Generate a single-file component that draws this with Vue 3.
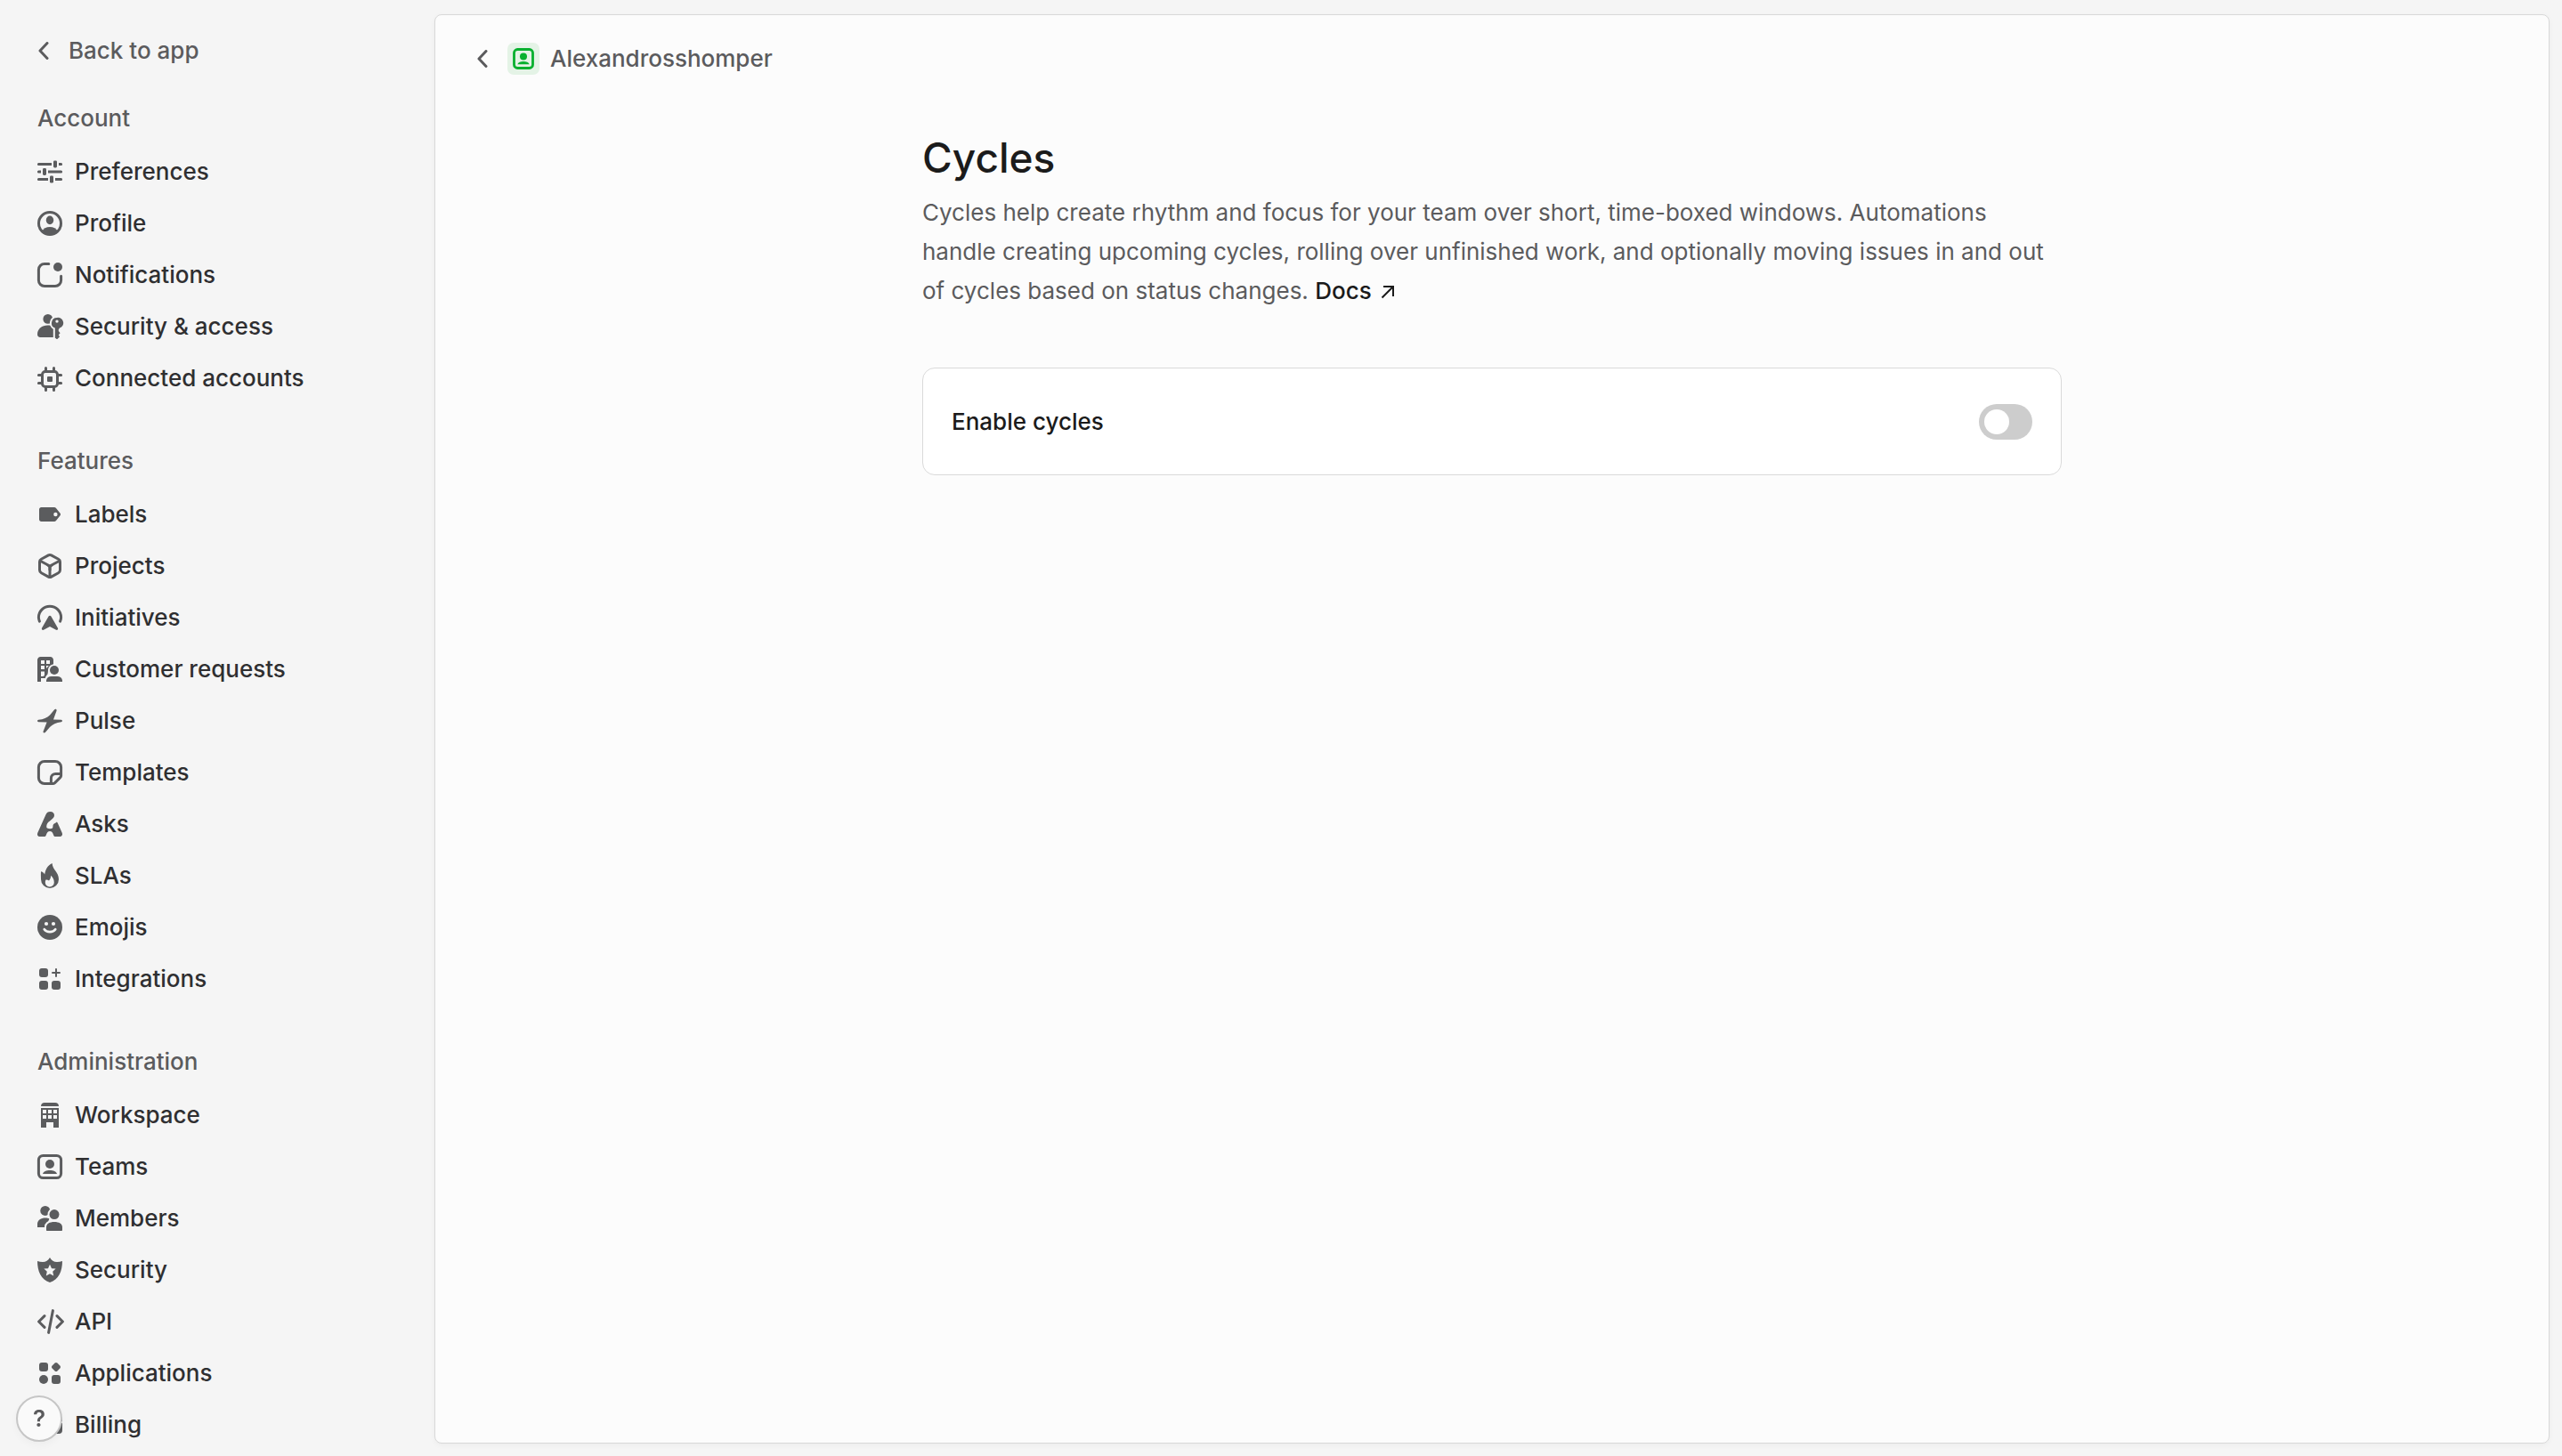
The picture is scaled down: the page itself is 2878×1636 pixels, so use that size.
<script setup>
import { ref } from 'vue'

const cyclesEnabled = ref(false)

const sections = [
  {
    title: 'Account',
    items: [
      {
        label: 'Preferences',
        icon: '<path class="line" d="M1.7 3.7H9M13 3.7h1.3M1.7 8H3M7 8h7.3M1.7 12.3H7M11 12.3h3.3"/><rect class="gap" x="10" y="1.7" width="2" height="4" rx=".7"/><rect class="gap" x="4" y="6" width="2" height="4" rx=".7"/><rect class="gap" x="8" y="10.3" width="2" height="4" rx=".7"/><rect x="10" y="1.7" width="2" height="4" rx=".7"/><rect x="4" y="6" width="2" height="4" rx=".7"/><rect x="8" y="10.3" width="2" height="4" rx=".7"/>'
      },
      {
        label: 'Profile',
        icon: '<circle class="line" cx="8" cy="8" r="6.25"/><ellipse cx="8" cy="6.2" rx="2.1" ry="2.4"/><path d="M3.5 12.6C4.3 10.9 6 10 8 10s3.7.9 4.5 2.6C11.400 13.900 9.800 14.600 8 14.600s-3.400-.700-4.500-2z"/>'
      },
      {
        label: 'Notifications',
        icon: '<path class="line" d="M7.400 1.700H5A3.300 3.300 0 0 0 1.700 5v6A3.300 3.300 0 0 0 5 14.300h6a3.300 3.300 0 0 0 3.300-3.300V8.600"/><circle cx="12.500" cy="3.500" r="2.500"/>'
      },
      {
        label: 'Security & access',
        icon: '<circle cx="6.900" cy="3.700" r="2.700"/><path d="M1 12.300c0-3 2.600-5 5.800-5 1.300 0 2.400.3 3.200 1V14H2.600C1.600 14 1 13.300 1 12.300z"/><path class="gap" d="M12 3a3 3 0 0 0-1.100 5.800v5.400l1 .8h.3l1.300-1.300-.7-1.100.9-1-.9-1.100.700-1.800A3 3 0 0 0 12 3z"/><path fill-rule="evenodd" d="M12 3a3 3 0 0 0-1.100 5.800v5.400l.9.800h.4l1.300-1.300-.6-1.100.9-1-.9-1.100v-.9l.6-.8A3 3 0 0 0 12 3zm0 1.200a.85.85 0 1 1 0 1.700.85.85 0 0 1 0-1.700z"/>'
      },
      {
        label: 'Connected accounts',
        icon: '<rect class="line" x="3.750" y="4.250" width="8.500" height="8.500" rx="1.600"/><rect x="6.500" y="7" width="3" height="3" rx=".5"/><path class="line" d="M5.750 4V2.200M10.250 4V2.200M5.750 13v1.800M10.250 13v1.800M3.500 6.250H1.700M3.500 10.750H1.700M12.500 6.250h1.800M12.500 10.750h1.800"/>'
      }
    ]
  },
  {
    title: 'Features',
    items: [
      {
        label: 'Labels',
        icon: '<path fill-rule="evenodd" d="M3.200 4h7.300c.4 0 .7.2 1 .5l2.300 2.900c.3.400.3.800 0 1.200l-2.300 2.900c-.3.300-.6.500-1 .500H3.200C2.500 12 2 11.500 2 10.800V5.200C2 4.500 2.500 4 3.200 4zm8 2.900a1.100 1.100 0 1 0 0 2.200 1.100 1.100 0 0 0 0-2.200z"/>'
      },
      {
        label: 'Projects',
        icon: '<path class="line" d="M7.200 1.950a1.700 1.700 0 0 1 1.600 0l4 2.200a1.800 1.800 0 0 1 .950 1.600v4.500a1.800 1.800 0 0 1-.950 1.600l-4 2.200a1.700 1.700 0 0 1-1.600 0l-4-2.200a1.800 1.800 0 0 1-.950-1.600v-4.500a1.800 1.800 0 0 1 .950-1.600z"/><path class="line" d="M2.600 5.100 8 8l5.400-2.900M8 8v6"/><path d="M6 7 8 8l2-1v.6L8.750 8.700v1.800h-1.500V8.700L6 7.600z"/>'
      },
      {
        label: 'Initiatives',
        icon: '<path class="line" d="M2.200 10.100A6.300 6.300 0 0 1 1.700 7.900 6.300 6.300 0 0 1 14.300 7.900c0 .8-.2 1.500-.5 2.200"/><path d="M7.300 7.200c.3-.5 1.100-.5 1.400 0l3.800 6.700c.3.700-.3 1.300-1 1L8 13l-3.500 1.900c-.7.300-1.300-.3-1-1z"/>'
      },
      {
        label: 'Customer requests',
        icon: '<path fill-rule="evenodd" d="M2.800 1h5.400C9.200 1 10 1.800 10 2.800v2.300C8.300 5.500 7 6.800 7 8.500c0 .9-.1 1.700-.3 2.400C6 11.500 5.600 12.300 5.400 13H3v2H1V2.800C1 1.800 1.800 1 2.800 1zM3 3v2h2V3zm3 0v2h2V3zM3 6v2h2V6zm3 0v1.500L7.400 6zM3 9.300V12h1c.7 0 1-.5 1-1V9.300z"/><circle cx="10.500" cy="8.500" r="2.500"/><path d="M6 14.300C6.200 12.800 7.300 12 8.800 12h3.400c1.500 0 2.600.8 2.800 2.300V15H6z"/>'
      },
      {
        label: 'Pulse',
        icon: '<path d="M10.500 1.700c.5-.7 1.500-.3 1.300.5L10 7.200l4.400.2c.8.100.8 1.100 0 1.200C11.500 8.900 9.500 10 8 11.500l-2.600 3c-.5.500-1.400.1-1.100-.6L6.300 8.800 1.600 8.600C.8 8.500.8 7.500 1.600 7.400 4.500 7.100 6.500 6.200 8 4.700z"/>'
      },
      {
        label: 'Templates',
        icon: '<path class="line" d="M14.300 9V5A3.300 3.300 0 0 0 11 1.700H5A3.300 3.300 0 0 0 1.700 5v6A3.300 3.300 0 0 0 5 14.300h4.700c.4 0 .8-.2 1.100-.5l3-3c.3-.3.500-.7.500-1.100zM14 8.700h-2.800a2.500 2.500 0 0 0-2.500 2.500V14"/>'
      },
      {
        label: 'Asks',
        icon: '<path d="M8.200 1c1.500 0 2.300.9 2.300 2 0 2.400-3.700 3.200-4.200 5.300-.3 1.200-.2 1.700.2 2 1.100.4 2.300.4 3-.1.400-.6 0-1.500.6-2.200.8-.8 1.300-.7 1.800-1.300.4.300.5.700.6.900l2.400 5.400c.4 1.100-.2 2-1.300 2h-2.700c-1.300 0-.6-3-2.900-3s-1.600 3-2.900 3H2.300c-1.100 0-1.600-.9-1.200-2L5.700 2.700C6.200 1.600 7 1 8.200 1z"/>'
      },
      {
        label: 'SLAs',
        icon: '<path fill-rule="evenodd" d="M9.300 1c.3 3.900 3.700 4.900 3.700 9a5 5 0 0 1-10 0c0-1.700-.1-2.600 0-4.400.7 0 1.700.8 2.100 1.600C5.600 4.500 6.700 2.200 9.300 1zM8.500 7.900c.1 1.300-.3 2.200-1 2.800-.6-.3-1.100-.5-1.700-.4-.3.400-.4.900-.4 1.400a2.500 2.500 0 0 0 5 0c0-1.700-.8-2.800-1.900-3.800z"/>'
      },
      {
        label: 'Emojis',
        icon: '<circle cx="8" cy="8" r="7"/><circle class="cut" cx="6" cy="6" r="1.050"/><circle class="cut" cx="10" cy="6" r="1.050"/><path class="cutline" d="M4.900 9.100C6.200 11 9.800 11 11.100 9.100"/>'
      },
      {
        label: 'Integrations',
        icon: '<rect x="2" y="2" width="5" height="5" rx="1.500"/><rect x="2" y="9" width="5" height="5" rx="1.500"/><rect x="9" y="9" width="5" height="5" rx="1.500"/><path class="thin" d="M11.500 2.500v4M9.500 4.500h4"/>'
      }
    ]
  },
  {
    title: 'Administration',
    items: [
      {
        label: 'Workspace',
        icon: '<path d="M3 3c0-1.200.8-2 2-2h6c1.200 0 2 .8 2 2z"/><path fill-rule="evenodd" d="M3 4h10v11h-3v-3H6v3H3zm1 1v2h2V5zm3 0v2h2V5zm3 0v2h2V5zM4 8v2h2V8zm3 0v2h2V8zm3 0v2h2V8z"/>'
      },
      {
        label: 'Teams',
        icon: '<rect class="line" x="1.700" y="1.700" width="12.600" height="12.600" rx="2.500"/><circle cx="8" cy="6.500" r="2.500"/><path d="M4 12c.4-1.300 2-2 4-2s3.600.7 4 2z"/>'
      },
      {
        label: 'Members',
        icon: '<circle cx="5.400" cy="3.700" r="2.750"/><path d="M1 13v-2c0-2 2-3.300 4.500-3.300 1 0 1.600.1 2.300.4L5.500 13z"/><circle class="gap" cx="10.500" cy="5.800" r="2.750"/><path class="gap" d="M6 14.500V13c0-2 1.800-3 4.500-3s4.500 1 4.500 3v1.500c0 .3-.2.5-.5.500h-8c-.3 0-.5-.2-.5-.5z"/><circle cx="10.500" cy="5.800" r="2.750"/><path d="M6 14.500V13c0-2 1.800-3 4.500-3s4.500 1 4.500 3v1.500c0 .3-.2.5-.5.500h-8c-.3 0-.5-.2-.5-.5z"/>'
      },
      {
        label: 'Security',
        icon: '<path fill-rule="evenodd" d="M8 1c1 1.700 2.200 2.500 4 2.500 1.100 0 2-.2 3-.5 0 5.500-2 10.500-7 12C3 13.500 1 8.500 1 3c1 .3 1.900.5 3 .5 1.800 0 3-.8 4-2.500zm0 3.900-1 2.200-2.300.2 1.700 1.600-.5 2.400L8 10.100l2.100 1.200-.5-2.400 1.700-1.600L9 7.100z"/>'
      },
      {
        label: 'API',
        icon: '<path class="line" d="M5 4.800 1.800 8 5 11.200M12 4.800 15.200 8 12 11.200M9.700 1.800 7.300 14.200"/>'
      },
      {
        label: 'Applications',
        icon: '<rect x="2" y="2" width="5" height="5" rx="1.500"/><path d="M10.800 2.300c.4-.4 1-.4 1.400 0l1.500 1.500c.4.400.4 1 0 1.400l-1.500 1.500c-.4.400-1 .4-1.400 0L9.300 5.200c-.4-.4-.4-1 0-1.400z"/><circle cx="4.500" cy="11.500" r="2.500"/><rect x="9" y="9" width="5" height="5" rx="1.500"/>'
      },
      {
        label: 'Billing',
        icon: '<path d="M3 3h10a2 2 0 0 1 2 2v1H1V5a2 2 0 0 1 2-2z"/><path d="M1 7h14v4a2 2 0 0 1-2 2H3a2 2 0 0 1-2-2z"/>'
      }
    ]
  }
]
</script>

<template>
  <div class="app">
    <aside class="sidebar">
      <a class="back" href="#">
        <svg class="chevron" viewBox="0 0 12 20" aria-hidden="true"><path d="M10 1.500 2 10l8 8.500" /></svg>
        <span>Back to app</span>
      </a>
      <nav class="sections" aria-label="Settings">
        <section v-for="section in sections" :key="section.title">
          <h2>{{ section.title }}</h2>
          <ul>
            <li v-for="item in section.items" :key="item.label">
              <a class="item" href="#">
                <svg class="icon" viewBox="0 0 16 16" aria-hidden="true" v-html="item.icon"></svg>
                <span>{{ item.label }}</span>
              </a>
            </li>
          </ul>
        </section>
      </nav>
      <button class="help" type="button">?</button>
    </aside>

    <main class="panel">
      <header class="crumbs">
        <a class="crumb-back" href="#" aria-label="Back">
          <svg class="chevron" viewBox="0 0 12 20" aria-hidden="true"><path d="M10 1.500 2 10l8 8.500" /></svg>
        </a>
        <a class="team" href="#">
          <span class="badge">
            <svg viewBox="0 0 16 16" aria-hidden="true">
              <rect class="frame" x="2" y="2" width="12" height="12" rx="2.200" />
              <circle cx="8" cy="6.600" r="2.300" />
              <path d="M4.200 11.600C4.600 10.300 6.200 9.700 8 9.700s3.400.6 3.800 1.900z" />
            </svg>
          </span>
          <span>Alexandrosshomper</span>
        </a>
      </header>

      <div class="content">
        <h1>Cycles</h1>
        <p>
          Cycles help create rhythm and focus for your team over short, time-boxed windows. Automations handle
          creating upcoming cycles, rolling over unfinished work, and optionally moving issues in and out of cycles
          based on status changes.
          <a class="docs" href="#">Docs <svg viewBox="0 0 16 16" aria-hidden="true"><path d="M1.500 14.500 14 2M3 2h11v11" /></svg></a>
        </p>
        <div class="card">
          <label for="enable-cycles">Enable cycles</label>
          <input id="enable-cycles" v-model="cyclesEnabled" class="toggle" type="checkbox" role="switch" />
        </div>
      </div>
    </main>
  </div>
</template>

<style>
body {
  margin: 0;
  background: #f5f5f5;
}
</style>

<style scoped>
.app {
  box-sizing: border-box;
  display: grid;
  grid-template-columns: 488px minmax(0, 1fr);
  min-height: 100vh;
  padding: 16px 14px 0 0;
  background: #f5f5f5;
  color: #2f2f31;
  font-family: Inter, "Liberation Sans", sans-serif;
  font-size: 26px;
  line-height: 32px;
}

a {
  color: inherit;
  text-decoration: none;
}

.sidebar {
  display: flex;
  flex-direction: column;
  font-weight: 500;
}

.back {
  display: flex;
  align-items: center;
  gap: 22px;
  height: 82px;
  padding-left: 43px;
  color: #5b5b5d;
}

.chevron {
  width: 12px;
  height: 20px;
  fill: none;
  stroke: #5b5b5d;
  stroke-width: 3;
  stroke-linecap: round;
  stroke-linejoin: round;
}

.sections {
  display: flex;
  flex-direction: column;
  gap: 34px;
  margin-top: 5px;
}

h2 {
  margin: 0 0 1px;
  padding-left: 42px;
  color: #5b5b5d;
  font-size: 26px;
  font-weight: 500;
  line-height: 60px;
}

ul {
  margin: 0;
  padding: 0;
  list-style: none;
}

.item {
  display: flex;
  align-items: center;
  gap: 12px;
  height: 58px;
  padding-left: 40px;
}

.icon {
  width: 32px;
  height: 32px;
  fill: #5b5c5e;
}

.icon :deep(.line),
.icon :deep(.thin) {
  fill: none;
  stroke: #5b5c5e;
  stroke-width: 1.5;
  stroke-linecap: round;
  stroke-linejoin: round;
}

.icon :deep(.thin) {
  stroke-width: 1;
}

.icon :deep(.gap) {
  fill: #f5f5f5;
  stroke: #f5f5f5;
  stroke-width: 2;
}

.icon :deep(.cut) {
  fill: #f5f5f5;
}

.icon :deep(.cutline) {
  fill: none;
  stroke: #f5f5f5;
  stroke-width: 1.4;
  stroke-linecap: round;
}

.help {
  position: fixed;
  bottom: 16px;
  left: 18px;
  box-sizing: border-box;
  width: 52px;
  height: 52px;
  padding: 0;
  border: 2px solid #c6c6c6;
  border-radius: 50%;
  background: #fafafa;
  box-shadow: 0 4px 8px rgba(0, 0, 0, 0.03);
  color: #5b5b5d;
  font: 600 26px/32px Inter, "Liberation Sans", sans-serif;
}

.panel {
  margin-bottom: 14px;
  border: 1px solid #d8d8d8;
  border-radius: 8px;
  background: #fcfcfc;
  box-shadow: 0 2px 6px rgba(0, 0, 0, 0.04);
}

.crumbs {
  display: flex;
  align-items: center;
  gap: 22px;
  height: 98px;
  padding-left: 47px;
  color: #5b5b5d;
  font-weight: 500;
}

.crumb-back {
  display: flex;
}

.team {
  display: flex;
  align-items: center;
  gap: 12px;
}

.badge {
  display: grid;
  place-items: center;
  width: 36px;
  height: 36px;
  border-radius: 7px;
  background: #e4f3e6;
}

.badge svg {
  width: 28px;
  height: 28px;
  fill: #08b02f;
}

.badge .frame {
  fill: none;
  stroke: #08b02f;
  stroke-width: 1.6;
}

.content {
  max-width: 1280px;
  margin: 0 auto;
  padding: 30px 32px 64px;
}

h1 {
  margin: 0 0 8px;
  color: #1b1b1b;
  font-size: 46px;
  font-weight: 450;
  line-height: 64px;
}

p {
  margin: 0 0 64px;
  color: #5b5b5d;
  font-weight: 425;
  line-height: 44px;
}

.docs {
  color: #1b1b1b;
  font-weight: 450;
  white-space: nowrap;
}

.docs svg {
  width: 16px;
  height: 16px;
  margin-left: 3px;
  fill: none;
  stroke: #1b1b1b;
  stroke-width: 2;
}

.card {
  display: flex;
  align-items: center;
  justify-content: space-between;
  height: 119px;
  padding: 0 32px;
  border: 1px solid #dadada;
  border-radius: 14px;
  background: #fff;
  color: #1b1b1b;
  font-weight: 500;
}

.toggle {
  appearance: none;
  display: flex;
  align-items: center;
  box-sizing: border-box;
  width: 60px;
  height: 40px;
  margin: 0;
  padding: 6px;
  border-radius: 20px;
  background: #cdcdcd;
}

.toggle::before {
  content: "";
  width: 28px;
  height: 28px;
  border-radius: 50%;
  background: #fff;
}

.toggle:checked {
  justify-content: flex-end;
  background: #5e6ad2;
}
</style>
